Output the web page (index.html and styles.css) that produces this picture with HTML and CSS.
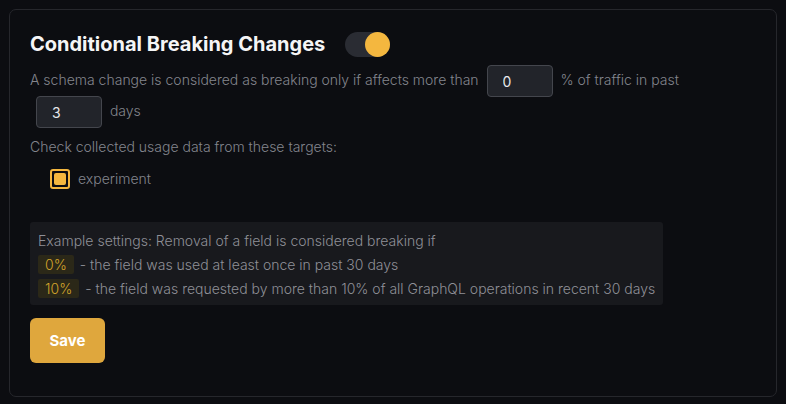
FILE: index.html
```html
<!DOCTYPE html>
<html>
<head>
<meta charset="utf-8">
<link rel="stylesheet" href="styles.css">
</head>
<body>
<div class="card">
  <div class="header">
    <h2 class="title">Conditional Breaking Changes</h2>
    <span class="switch"><span class="thumb"></span></span>
  </div>
  <p class="desc">A schema change is considered as breaking only if affects more than <input class="num" type="text" value="0"> % of traffic in past <input class="num" type="text" value="3"> days</p>
  <p class="label">Check collected usage data from these targets:</p>
  <div class="targets">
    <label class="target"><span class="check"><span class="check-fill"></span></span><span>experiment</span></label>
  </div>
  <div class="example">
    <div class="ex-line">Example settings: Removal of a field is considered breaking if</div>
    <div class="ex-line"><span class="badge">0%</span><span>- the field was used at least once in past 30 days</span></div>
    <div class="ex-line"><span class="badge">10%</span><span>- the field was requested by more than 10% of all GraphQL operations in recent 30 days</span></div>
  </div>
  <div class="actions"><button class="save">Save</button></div>
</div>
</body>
</html>
```
FILE: styles.css
```css
* { box-sizing: border-box; }
html, body { background: #0c0d11; }
body {
  margin: 0;
  padding: 9px;
  font-family: Inter, "Noto Sans", sans-serif;
  color: #83858d;
}
.card {
  border: 1px solid #26272c;
  border-radius: 7px;
  background: #0c0d11;
  padding: 20px 20px 32px 20px;
  height: 388px;
}
.header {
  display: flex;
  align-items: center;
  height: 28px;
}
.title {
  margin: 0;
  font-size: 20px;
  line-height: 28px;
  font-weight: 700;
  color: #f5f5f6;
}
.switch {
  margin-left: 20px;
  width: 45px;
  height: 25px;
  border-radius: 13px;
  background: #2a2c33;
  display: flex;
  justify-content: flex-end;
}
.thumb {
  width: 25px;
  height: 25px;
  border-radius: 50%;
  background: #f4b73f;
}
.desc {
  margin: 7px 0 0 0;
  font-size: 14px;
  font-weight: 300;
  line-height: 30px;
}
.num {
  width: 66px;
  height: 32px;
  margin: -1px 4px -1px 4px;
  padding: 0 0 0 15px;
  background: #22242a;
  border: 1px solid #44464d;
  border-radius: 4px;
  color: #e8e8ea;
  font-family: Inter, sans-serif;
  font-size: 14px;
  font-weight: 400;
  vertical-align: middle;
  outline: none;
}
.desc .num:last-child { margin-left: 6px; }
.label {
  margin: 10px 0 0 0;
  font-size: 14px;
  font-weight: 300;
  line-height: 20px;
}
.targets {
  margin-top: 12px;
  padding-left: 20px;
}
.target {
  display: flex;
  align-items: center;
  gap: 8px;
  font-size: 14px;
  font-weight: 300;
  line-height: 20px;
}
.check {
  width: 20px;
  height: 20px;
  border: 2px solid #f4b73f;
  border-radius: 3px;
  padding: 2px;
  display: flex;
}
.check-fill {
  flex: 1;
  background: #f4b73f;
  border-radius: 2px;
}
.example {
  margin-top: 33px;
  width: fit-content;
  background: #18191d;
  border-radius: 3px;
  padding: 6px 8px 5px 8px;
  font-size: 14px;
  font-weight: 300;
  color: #8f9097;
}
.ex-line {
  height: 24px;
  display: flex;
  align-items: center;
  gap: 6px;
  white-space: nowrap;
}
.badge {
  background: #2b2818;
  color: #d3a42b;
  padding: 0 7px;
  height: 19px;
  line-height: 19px;
  border-radius: 2px;
}
.actions { margin-top: 13px; }
.save {
  width: 75px;
  height: 45px;
  border: none;
  border-radius: 6px;
  background: #dfa73d;
  color: #ffffff;
  font-family: Inter, sans-serif;
  font-weight: 700;
  font-size: 15px;
}
```
